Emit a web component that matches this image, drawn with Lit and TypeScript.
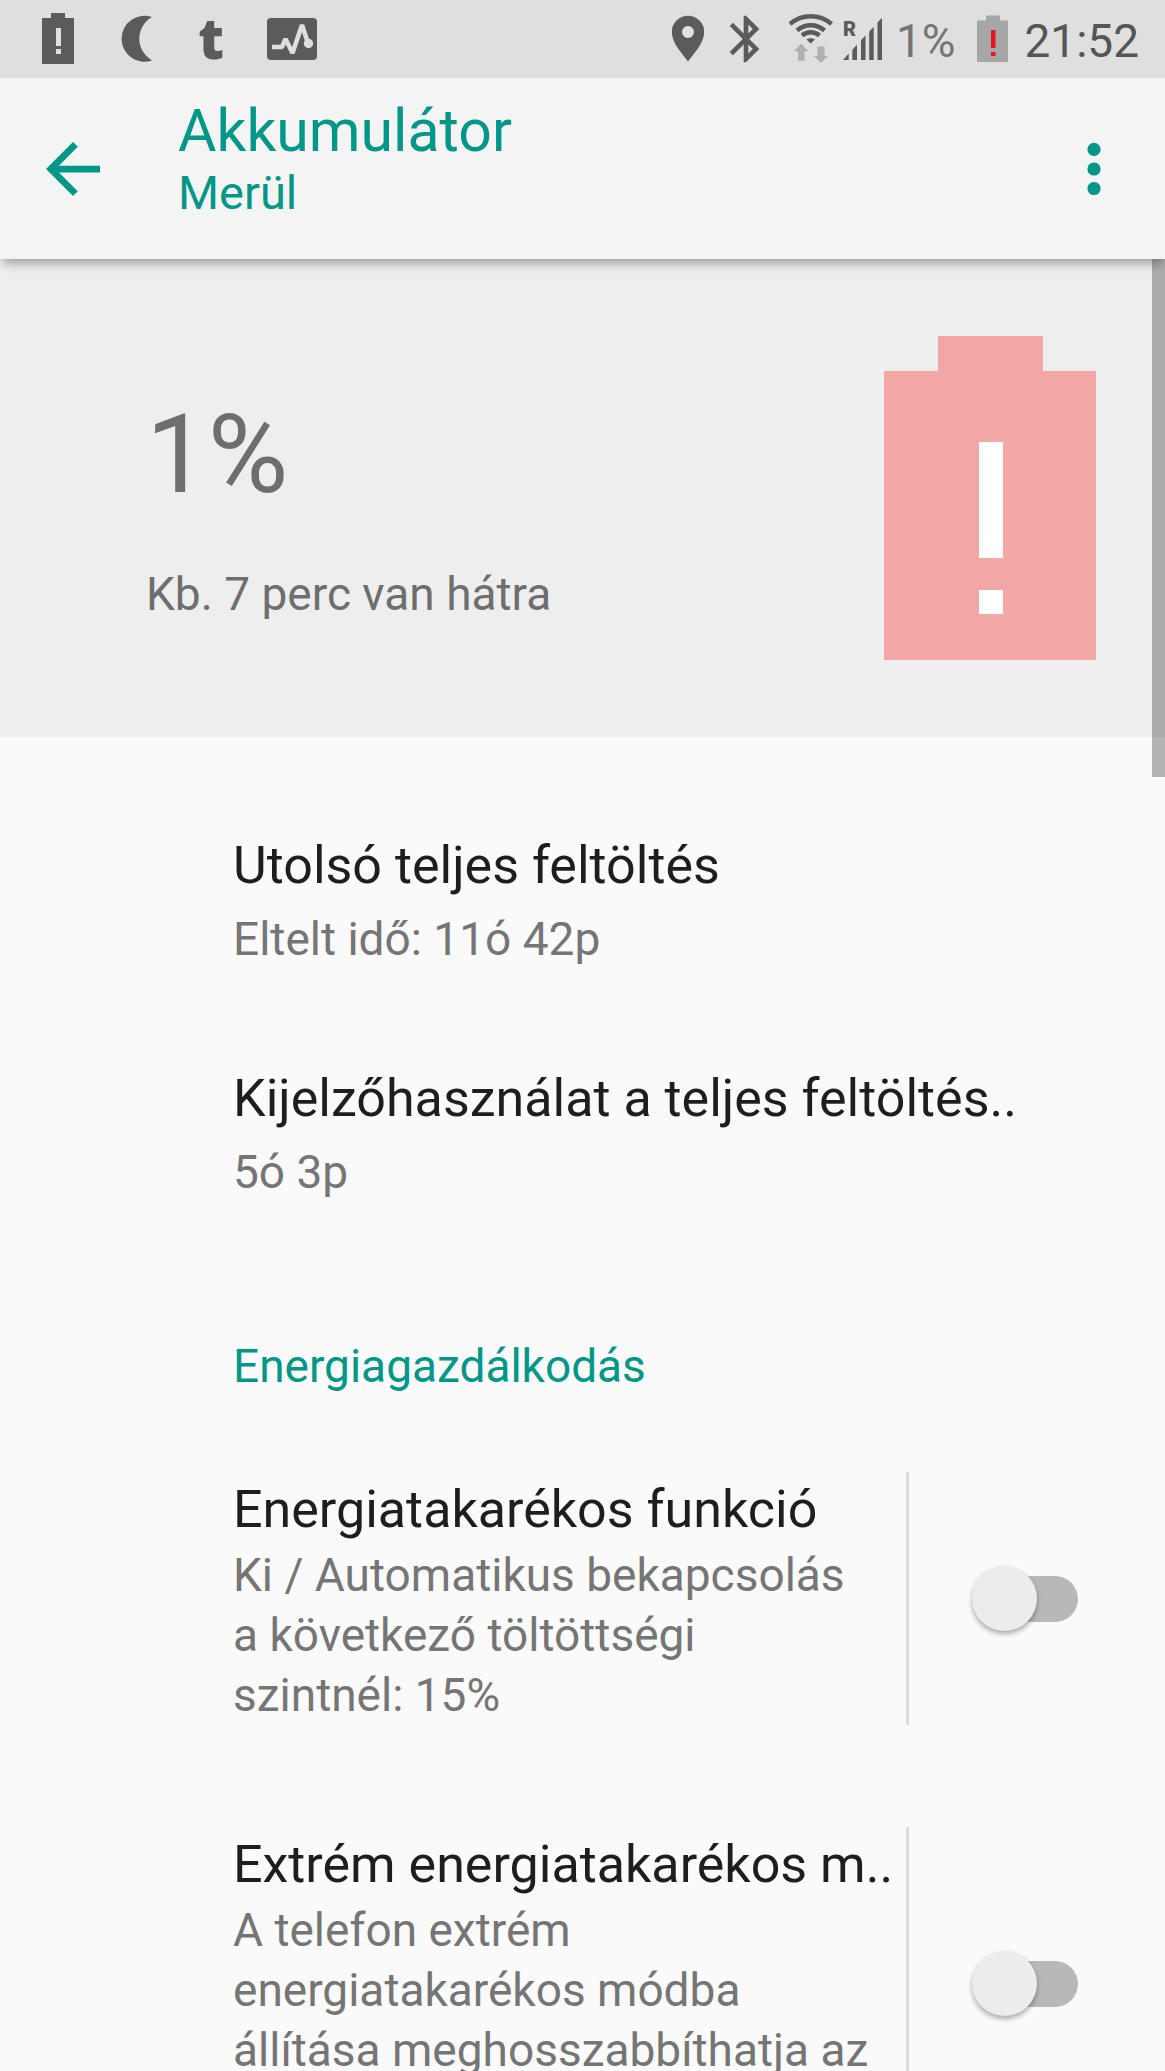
import { LitElement, html, css } from "lit";
import { customElement, state } from "lit/decorators.js";

interface InfoItem {
  title: string;
  summary: string;
}

interface SwitchItem {
  id: string;
  title: string;
  summary: string;
  on: boolean;
}

const INFO: InfoItem[] = [
  { title: "Utolsó teljes feltöltés", summary: "Eltelt idő: 11ó 42p" },
  { title: "Kijelzőhasználat a teljes feltöltés..", summary: "5ó 3p" },
];

@customElement("status-bar")
class StatusBar extends LitElement {
  static styles = css`
    :host {
      display: flex;
      justify-content: space-between;
      align-items: center;
      height: 78px;
      padding: 0 26px 0 41px;
      box-sizing: border-box;
      background: #dfdfdf;
      color: #5b5b5b;
      font-size: 46px;
      line-height: 78px;
    }
    .group {
      display: flex;
      align-items: center;
      gap: 14px;
    }
    .notifications {
      gap: 44px;
    }
    .network {
      display: flex;
      gap: 10px;
    }
    svg {
      display: block;
      fill: currentColor;
    }
    .tumblr {
      display: flex;
      justify-content: center;
      width: 24px;
      font: 800 56px/74px "Open Sans", sans-serif;
      padding-bottom: 4px;
    }
    .percent,
    .clock {
      padding-top: 4px;
    }
    .percent {
      color: #757575;
    }
    .clock {
      color: #555;
    }
    .carrier {
      font: 900 20px Roboto, sans-serif;
    }
  `;

  render() {
    return html`
      <div class="group notifications">
        <svg width="34" height="78" viewBox="41 0 34 78" aria-hidden="true">
          <path
            fill-rule="evenodd"
            d="M51 13h14v5h9v46H42V18h9zM56 28v18h5V28zM56 49v5h5v-5z"
          />
        </svg>
        <svg width="36" height="78" viewBox="119 0 36 78" aria-hidden="true">
          <path d="M152 17A23 23 0 1 0 152 60.500A25 25 0 0 1 152 17z" />
        </svg>
        <span class="tumblr">t</span>
        <svg width="50" height="78" viewBox="266 0 50 78" aria-hidden="true">
          <rect x="266" y="18" width="50" height="42" rx="4" />
          <path
            d="M271 47h10l3.500-8L291.500 53 301 25l6 18"
            fill="none"
            stroke="#dfdfdf"
            stroke-width="4.500"
            stroke-linejoin="bevel"
          />
          <circle cx="307.500" cy="43.500" r="4.700" fill="#dfdfdf" />
        </svg>
      </div>
      <div class="group">
        <svg width="32" height="78" viewBox="671 0 32 78" aria-hidden="true">
          <path
            fill-rule="evenodd"
            d="M687 15.700A16.200 16.200 0 0 0 670.800 32C670.800 42 679 51 687 61.500 695 51 703.200 42 703.200 32A16.200 16.200 0 0 0 687 15.700zM687 26a6 6 0 1 1 0 12 6 6 0 0 1 0-12z"
          />
        </svg>
        <svg width="56" height="56" viewBox="0 0 24 24" aria-hidden="true">
          <path
            d="M17.710 7.710L12 2h-1v7.590L6.410 5 5 6.410 10.590 12 5 17.590 6.410 19 11 14.410V22h1l5.710-5.710-4.300-4.290 4.300-4.290zM13 5.830l1.880 1.880L13 9.590V5.830zm1.880 10.460L13 18.170v-3.760l1.880 1.880z"
          />
        </svg>
        <div class="network">
          <svg width="45" height="78" viewBox="787 0 45 78" aria-hidden="true">
            <g fill="none" stroke="currentColor" stroke-width="4.400">
              <path d="M789 24A31.500 31.500 0 0 1 830.500 24" />
              <path d="M796 30.500A20.500 20.500 0 0 1 823.500 30.500" />
              <path d="M801 35.500A13.500 13.500 0 0 1 818.500 35.500" />
            </g>
            <path d="M805.500 39.500Q809.700 37 814 39.500L809.700 43.500z" />
            <path
              fill="#b0b0b0"
              d="M800.200 43.500l7.300 7.700h-4v9.500h-6.500v-9.500h-4zM819.800 63l-7-7h3.700v-9.500h7V56h3.700z"
            />
          </svg>
          <svg width="39" height="78" viewBox="842 0 39 78" aria-hidden="true">
            <path
              d="M842 60l5.700-6.500V60zM851.300 60V49.700l4.700-5V60zM860 60V40.300l4.500-4.800V60zM868.200 60V31.500l4.500-4.800V60zM876.500 60V22.500l4.500-4.800V60z"
            />
            <text class="carrier" x="842" y="36">R</text>
          </svg>
        </div>
        <span class="percent">1%</span>
        <svg width="41" height="78" viewBox="969 0 41 78" aria-hidden="true">
          <path fill="#a6a6a6" d="M986 15.500h14v5h8V62h-31V20.500h9z" />
          <path fill="#e8131a" d="M991 30h4.500v18H991zM991 52h4.500v4H991z" />
        </svg>
        <time class="clock">21:52</time>
      </div>
    `;
  }
}

@customElement("app-root")
class AppRoot extends LitElement {
  static styles = css`
    :host {
      display: flex;
      flex-direction: column;
      height: 100vh;
      overflow: hidden;
      background: #fafafa;
      color: #1e1e1e;
      font-family: Roboto, "Noto Sans", sans-serif;
    }
    status-bar {
      flex: none;
    }
    h1,
    h2,
    h3,
    p {
      margin: 0;
      font-weight: 400;
    }
    svg {
      display: block;
      fill: currentColor;
    }
    button {
      display: flex;
      padding: 0;
      border: 0;
      background: none;
      color: inherit;
    }
    .app-bar {
      position: relative;
      z-index: 2;
      flex: none;
      display: flex;
      align-items: center;
      height: 181px;
      padding: 0 64px 0 46px;
      box-sizing: border-box;
      background: #f4f4f4;
      color: #009688;
      box-shadow: 0 7px 10px -3px rgba(0, 0, 0, 0.36);
    }
    .headings {
      flex: 1;
      padding: 0 0 20px 78px;
    }
    .app-title {
      font-size: 59px;
      line-height: 68px;
    }
    .app-subtitle {
      font-size: 47px;
      line-height: 56px;
    }
    .content {
      position: relative;
      flex: 1;
      min-height: 0;
      overflow: hidden;
    }
    .scroll-thumb {
      position: absolute;
      z-index: 1;
      top: 0;
      right: 0;
      width: 13px;
      height: 518px;
      background: rgba(0, 0, 0, 0.28);
    }
    .hero {
      display: flex;
      justify-content: space-between;
      align-items: center;
      height: 478px;
      padding: 0 69px 0 146px;
      box-sizing: border-box;
      background: #eee;
      color: #6e6e6e;
    }
    .reading {
      display: flex;
      flex-direction: column;
      gap: 44px;
      padding-top: 18px;
    }
    .level {
      font-size: 110px;
      line-height: 130px;
    }
    .summary,
    .remaining,
    .category {
      font-size: 46px;
      line-height: 60px;
    }
    .list {
      display: flex;
      flex-direction: column;
      padding: 98px 0 0 233px;
    }
    .info {
      display: flex;
      flex-direction: column;
      gap: 99px;
    }
    .info-item {
      display: flex;
      flex-direction: column;
      gap: 12px;
    }
    .title {
      display: block;
      font-size: 52px;
      line-height: 62px;
      white-space: nowrap;
    }
    .summary {
      color: #757575;
      white-space: pre-line;
    }
    .category {
      padding: 134px 0 76px;
      color: #009688;
    }
    .switches {
      display: flex;
      flex-direction: column;
      gap: 102px;
    }
    .switch-row {
      display: flex;
      align-items: stretch;
    }
    .switch-text {
      flex: 1;
      min-width: 0;
      display: flex;
      flex-direction: column;
      gap: 4px;
      padding-top: 7px;
    }
    .tall {
      min-height: 240px;
    }
    .switch-cell {
      display: flex;
      align-items: center;
      padding: 0 87px 0 63px;
      border-left: 3px solid #dcdcdc;
    }
    .switch {
      appearance: none;
      display: grid;
      align-items: center;
      width: 106px;
      height: 65px;
      margin: 0;
    }
    .switch::before,
    .switch::after {
      content: "";
      grid-area: 1 / 1;
    }
    .switch::before {
      height: 46px;
      margin-left: 12px;
      border-radius: 23px;
      background: #b8b8b8;
    }
    .switch::after {
      width: 65px;
      height: 65px;
      border-radius: 50%;
      background: #ececec;
      box-shadow: 0 3px 5px rgba(0, 0, 0, 0.32);
    }
    .switch:checked::before {
      margin: 0 12px 0 0;
      background: #80cbc4;
    }
    .switch:checked::after {
      justify-self: end;
      background: #009688;
    }
  `;

  @state() private switches: SwitchItem[] = [
    {
      id: "saver",
      title: "Energiatakarékos funkció",
      summary: "Ki / Automatikus bekapcsolás\na következő töltöttségi\nszintnél: 15%",
      on: false,
    },
    {
      id: "extreme-saver",
      title: "Extrém energiatakarékos m..",
      summary: "A telefon extrém\nenergiatakarékos módba\nállítása meghosszabbíthatja az",
      on: false,
    },
  ];

  private toggle(id: string) {
    this.switches = this.switches.map((s) => (s.id === id ? { ...s, on: !s.on } : s));
  }

  private renderSwitch(item: SwitchItem) {
    const tall = item.id === "extreme-saver" ? "summary tall" : "summary";
    return html`
      <div class="switch-row">
        <div class="switch-text">
          <label class="title" for=${item.id}>${item.title}</label>
          <p class=${tall}>${item.summary}</p>
        </div>
        <div class="switch-cell">
          <input
            class="switch"
            type="checkbox"
            role="switch"
            id=${item.id}
            .checked=${item.on}
            @change=${() => this.toggle(item.id)}
          />
        </div>
      </div>
    `;
  }

  render() {
    return html`
      <status-bar></status-bar>
      <header class="app-bar">
        <button type="button" aria-label="Vissza">
          <svg width="54" height="54" viewBox="4 4 16 16">
            <path d="M20 11H7.830l5.590-5.590L12 4l-8 8 8 8 1.410-1.410L7.830 13H20v-2z" />
          </svg>
        </button>
        <div class="headings">
          <h1 class="app-title">Akkumulátor</h1>
          <p class="app-subtitle">Merül</p>
        </div>
        <button type="button" aria-label="További lehetőségek">
          <svg width="14" height="54" viewBox="0 0 14 54">
            <circle cx="7" cy="7.400" r="6.600" />
            <circle cx="7" cy="27" r="6.600" />
            <circle cx="7" cy="46.500" r="6.600" />
          </svg>
        </button>
      </header>
      <main class="content">
        <div class="scroll-thumb"></div>
        <section class="hero">
          <div class="reading">
            <div class="level">1%</div>
            <p class="remaining">Kb. 7 perc van hátra</p>
          </div>
          <svg width="212" height="324" viewBox="0 0 212 324" aria-hidden="true">
            <path fill="#f2a6a6" d="M54 0h105v35h53v289H0V35h54z" />
            <path fill="#fff" d="M95 106h24v116H95zM95 254h24v24H95z" />
          </svg>
        </section>
        <section class="list">
          <div class="info">
            ${INFO.map(
              (item) => html`
                <div class="info-item">
                  <h3 class="title">${item.title}</h3>
                  <p class="summary">${item.summary}</p>
                </div>
              `
            )}
          </div>
          <h2 class="category">Energiagazdálkodás</h2>
          <div class="switches">${this.switches.map((s) => this.renderSwitch(s))}</div>
        </section>
      </main>
    `;
  }
}
